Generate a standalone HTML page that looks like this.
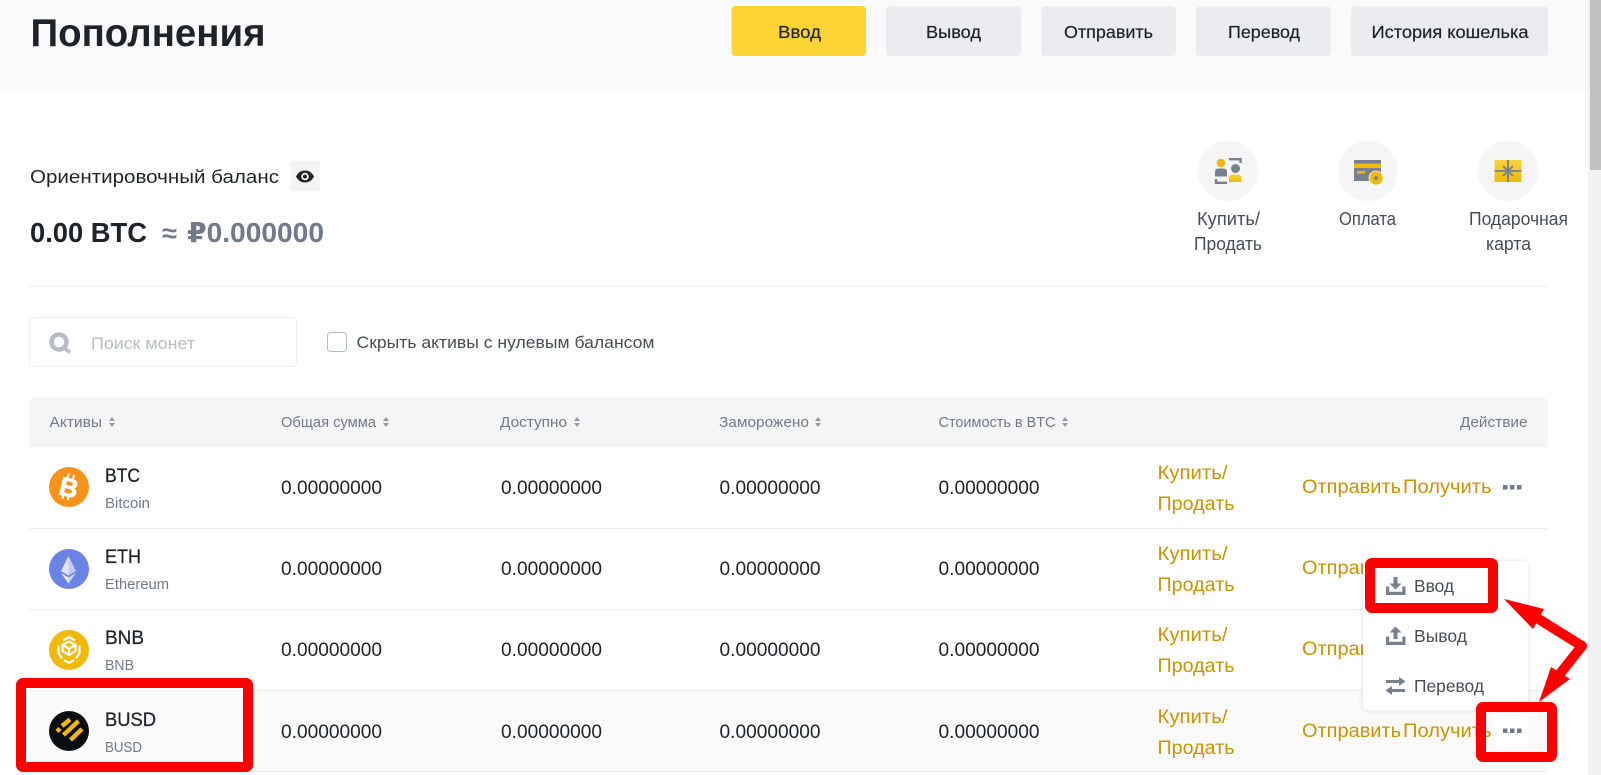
<!DOCTYPE html>
<html lang="ru">
<head>
<meta charset="utf-8">
<title>Пополнения</title>
<style>
html,body{margin:0;padding:0;width:1601px;height:775px;overflow:hidden;background:#fff}
svg{display:block}
text{font-family:"Liberation Sans","DejaVu Sans",sans-serif;fill:#1e2329}
.b{font-size:17.5px;stroke:#1e2329;stroke-width:.2px}
.h{font-size:14.5px;fill:#707a8a}
.n{font-size:19.5px;stroke:#1e2329;stroke-width:.25px}
.s{font-size:15px;fill:#707a8a}
.v{font-size:19px}
.g{font-size:19px;fill:#c99400}
.r{font-size:18px;fill:#474d57}
.m{font-size:17.5px;fill:#474d57}
</style>
</head>
<body>
<svg width="1601" height="775" viewBox="0 0 1601 775" xmlns="http://www.w3.org/2000/svg">
<defs>
<linearGradient id="y" x1="0" y1="0" x2="0" y2="1"><stop offset="0" stop-color="#f8d33a"/><stop offset="1" stop-color="#f0b90b"/></linearGradient>
<path id="sort" d="M0 4 3 0 6 4zM0 6 3 10 6 6z" fill="#929aa5"/>
</defs>

<!-- page header -->
<rect x="0" y="0" width="1589" height="91" fill="#fafafa"/>
<text x="30.500" y="46" font-size="39" font-weight="700" textLength="235" lengthAdjust="spacingAndGlyphs">Пополнения</text>
<rect x="731.500" y="6" width="134.500" height="50" rx="4" fill="#fcd535"/>
<rect x="886" y="6" width="135" height="50" rx="4" fill="#eaecef"/>
<rect x="1041" y="6" width="135" height="50" rx="4" fill="#eaecef"/>
<rect x="1196" y="6" width="135" height="50" rx="4" fill="#eaecef"/>
<rect x="1351" y="6" width="197" height="50" rx="4" fill="#eaecef"/>
<text class="b" x="778" y="38" textLength="43" lengthAdjust="spacingAndGlyphs">Ввод</text>
<text class="b" x="926" y="38" textLength="55" lengthAdjust="spacingAndGlyphs">Вывод</text>
<text class="b" x="1064" y="38" textLength="89" lengthAdjust="spacingAndGlyphs">Отправить</text>
<text class="b" x="1228" y="38" textLength="72" lengthAdjust="spacingAndGlyphs">Перевод</text>
<text class="b" x="1371.500" y="38" textLength="157" lengthAdjust="spacingAndGlyphs">История кошелька</text>

<!-- balance -->
<text x="30" y="183" font-size="18" textLength="249" lengthAdjust="spacingAndGlyphs">Ориентировочный баланс</text>
<rect x="290" y="161" width="30" height="30" rx="4" fill="#f5f5f5"/>
<path d="M296 176.500C298 172.500 301 170.500 305 170.500C309 170.500 312 172.500 314 176.500C312 180.500 309 182.500 305 182.500C301 182.500 298 180.500 296 176.500Z" fill="#1e2329"/>
<circle cx="305" cy="176.500" r="3.800" fill="#f5f5f5"/>
<circle cx="305" cy="176.500" r="2" fill="#1e2329"/>
<text x="30" y="242" font-size="28" font-weight="700" textLength="117" lengthAdjust="spacingAndGlyphs">0.00 BTC</text>
<text x="162" y="242" font-size="26" font-weight="700" style="fill:#707a8a" textLength="15" lengthAdjust="spacingAndGlyphs">≈</text>
<text x="187" y="242" font-size="28" font-weight="700" style="fill:#707a8a" textLength="137" lengthAdjust="spacingAndGlyphs">₽0.000000</text>

<!-- quick actions -->
<circle cx="1228" cy="171" r="30" fill="#f5f5f5"/>
<circle cx="1368" cy="171" r="30" fill="#f5f5f5"/>
<circle cx="1508" cy="171" r="30" fill="#f5f5f5"/>
<!-- buy/sell -->
<circle cx="1221" cy="163" r="4.300" fill="#f0b90b"/>
<path d="M1215 176.500V172Q1215 168.500 1218.500 168.500H1223.500Q1227 168.500 1227 172V176.500Z" fill="#76808f"/>
<circle cx="1235.500" cy="168.500" r="4.500" fill="#76808f"/>
<path d="M1229 182V178Q1229 174.500 1232.500 174.500H1238Q1241.500 174.500 1241.500 178V182Z" fill="url(#y)"/>
<path d="M1229 159.200H1240.500V163" fill="none" stroke="#76808f" stroke-width="2.400"/>
<path d="M1216 179V182.800H1227" fill="none" stroke="#76808f" stroke-width="2.400"/>
<!-- pay -->
<rect x="1354" y="160" width="27" height="21" fill="#76808f"/>
<rect x="1354" y="163.500" width="27" height="4.500" fill="#f0b90b"/>
<rect x="1357" y="171" width="8" height="2.500" fill="#f0b90b"/>
<circle cx="1376" cy="178" r="7" fill="#f0b90b" stroke="#f5f5f5" stroke-width="0.800"/>
<path d="M1376 175.500 1378.500 178 1376 180.500 1373.500 178Z" fill="#76808f"/>
<!-- gift -->
<rect x="1494.500" y="160" width="27" height="22" fill="url(#y)"/>
<path d="M1494.500 171H1521.500M1508 160V182M1503 166 1513 176M1513 166 1503 176" stroke="#76808f" stroke-width="1.800" fill="none"/>
<text class="r" x="1197" y="225" textLength="63" lengthAdjust="spacingAndGlyphs">Купить/</text>
<text class="r" x="1194" y="250" textLength="68" lengthAdjust="spacingAndGlyphs">Продать</text>
<text class="r" x="1339" y="225" textLength="57" lengthAdjust="spacingAndGlyphs">Оплата</text>
<text class="r" x="1469" y="225" textLength="99" lengthAdjust="spacingAndGlyphs">Подарочная</text>
<text class="r" x="1486" y="250" textLength="45" lengthAdjust="spacingAndGlyphs">карта</text>

<rect x="29" y="286" width="1519" height="1" fill="#eaecef"/>

<!-- search -->
<rect x="29.500" y="317.500" width="267" height="49" rx="4" fill="#fff" stroke="#eaecef"/>
<circle cx="59" cy="342" r="7.500" fill="none" stroke="#b7bdc6" stroke-width="4.500"/>
<path d="M63 347 70 352.500" stroke="#b7bdc6" stroke-width="3.500"/>
<text x="91" y="349" font-size="17" style="fill:#b7bdc6" textLength="104" lengthAdjust="spacingAndGlyphs">Поиск монет</text>
<rect x="327.500" y="332.500" width="19" height="19" rx="3" fill="#fff" stroke="#b7bdc6"/>
<text x="356.500" y="348" font-size="17" style="fill:#474d57" textLength="298" lengthAdjust="spacingAndGlyphs">Скрыть активы с нулевым балансом</text>

<!-- table header -->
<path d="M29 447V405Q29 397 37 397H1540Q1548 397 1548 405V447Z" fill="#f5f5f5"/>
<text class="h" x="49.500" y="427" textLength="52.500" lengthAdjust="spacingAndGlyphs">Активы</text>
<use href="#sort" x="109" y="417"/>
<text class="h" x="281" y="427" textLength="95" lengthAdjust="spacingAndGlyphs">Общая сумма</text>
<use href="#sort" x="383" y="417"/>
<text class="h" x="500" y="427" textLength="67" lengthAdjust="spacingAndGlyphs">Доступно</text>
<use href="#sort" x="574" y="417"/>
<text class="h" x="719" y="427" textLength="90" lengthAdjust="spacingAndGlyphs">Заморожено</text>
<use href="#sort" x="815" y="417"/>
<text class="h" x="938.500" y="427" textLength="117" lengthAdjust="spacingAndGlyphs">Стоимость в BTC</text>
<use href="#sort" x="1062" y="417"/>
<text class="h" x="1460" y="427" textLength="67.500" lengthAdjust="spacingAndGlyphs">Действие</text>

<!-- rows -->
<rect x="29" y="691" width="1519" height="80" fill="#fafafa"/>
<rect x="29" y="528" width="1519" height="1" fill="#eaecef"/>
<rect x="29" y="609" width="1519" height="1" fill="#eaecef"/>
<rect x="29" y="690" width="1519" height="1" fill="#eaecef"/>
<rect x="29" y="771" width="1519" height="1" fill="#eaecef"/>

<!-- BTC -->
<circle cx="69" cy="487" r="20" fill="#f7931a"/>
<g transform="rotate(14 69 487)">
<text x="69" y="496.500" font-size="26" font-weight="700" text-anchor="middle" style="fill:#fff;stroke:#fff;stroke-width:.7px">B</text>
<path d="M65.500 474V478M71 474V478M65.500 496V500M71 496V500" stroke="#fff" stroke-width="2.200"/>
</g>
<text class="n" x="105" y="482" textLength="35" lengthAdjust="spacingAndGlyphs">BTC</text>
<text class="s" x="105" y="508" textLength="45" lengthAdjust="spacingAndGlyphs">Bitcoin</text>
<text class="v" x="281" y="494" textLength="101" lengthAdjust="spacingAndGlyphs">0.00000000</text>
<text class="v" x="501" y="494" textLength="101" lengthAdjust="spacingAndGlyphs">0.00000000</text>
<text class="v" x="719.500" y="494" textLength="101" lengthAdjust="spacingAndGlyphs">0.00000000</text>
<text class="v" x="938.500" y="494" textLength="101" lengthAdjust="spacingAndGlyphs">0.00000000</text>
<text class="g" x="1157.500" y="479" textLength="70" lengthAdjust="spacingAndGlyphs">Купить/</text>
<text class="g" x="1157.500" y="510" textLength="77" lengthAdjust="spacingAndGlyphs">Продать</text>
<text class="g" x="1302" y="493" textLength="99" lengthAdjust="spacingAndGlyphs">Отправить</text>
<text class="g" x="1403" y="493" textLength="88.500" lengthAdjust="spacingAndGlyphs">Получить</text>
<path d="M1503 485h4.500v4.500h-4.500zM1510 485h4.500v4.500h-4.500zM1517 485h4.500v4.500h-4.500z" fill="#707a8a"/>

<!-- ETH -->
<circle cx="69" cy="569" r="20" fill="#6b83e4"/>
<path d="M68.500 556 61 571 68.500 575.500Z" fill="#dfe5f9"/>
<path d="M68.500 556 76 571 68.500 575.500Z" fill="#c3cdf4"/>
<path d="M61 573 68.500 583.500V577.500Z" fill="#e9edfb"/>
<path d="M76 573 68.500 583.500V577.500Z" fill="#ccd5f5"/>
<text class="n" x="105" y="563" textLength="36" lengthAdjust="spacingAndGlyphs">ETH</text>
<text class="s" x="105" y="589" textLength="64" lengthAdjust="spacingAndGlyphs">Ethereum</text>
<text class="v" x="281" y="575" textLength="101" lengthAdjust="spacingAndGlyphs">0.00000000</text>
<text class="v" x="501" y="575" textLength="101" lengthAdjust="spacingAndGlyphs">0.00000000</text>
<text class="v" x="719.500" y="575" textLength="101" lengthAdjust="spacingAndGlyphs">0.00000000</text>
<text class="v" x="938.500" y="575" textLength="101" lengthAdjust="spacingAndGlyphs">0.00000000</text>
<text class="g" x="1157.500" y="560" textLength="70" lengthAdjust="spacingAndGlyphs">Купить/</text>
<text class="g" x="1157.500" y="591" textLength="77" lengthAdjust="spacingAndGlyphs">Продать</text>
<text class="g" x="1302" y="574" textLength="99" lengthAdjust="spacingAndGlyphs">Отправить</text>

<!-- BNB -->
<circle cx="69" cy="650" r="20" fill="#f0b90b"/>
<g fill="none" stroke="#fff" stroke-width="2.200">
<path d="M63 640.500 69 637 75 640.500"/>
<path d="M58.500 645.500V653L62 658.500M79.500 645.500V653L76 658.500"/>
<path d="M62.500 645 69 641.500 75.500 645 75.500 651 69 655 62.500 651Z"/>
<path d="M62.500 645 69 648.500 75.500 645M69 648.500V655"/>
<path d="M64 660 69 663 74 660"/>
</g>
<text class="n" x="105" y="644" textLength="39" lengthAdjust="spacingAndGlyphs">BNB</text>
<text class="s" x="105" y="670" textLength="29" lengthAdjust="spacingAndGlyphs">BNB</text>
<text class="v" x="281" y="656" textLength="101" lengthAdjust="spacingAndGlyphs">0.00000000</text>
<text class="v" x="501" y="656" textLength="101" lengthAdjust="spacingAndGlyphs">0.00000000</text>
<text class="v" x="719.500" y="656" textLength="101" lengthAdjust="spacingAndGlyphs">0.00000000</text>
<text class="v" x="938.500" y="656" textLength="101" lengthAdjust="spacingAndGlyphs">0.00000000</text>
<text class="g" x="1157.500" y="641" textLength="70" lengthAdjust="spacingAndGlyphs">Купить/</text>
<text class="g" x="1157.500" y="672" textLength="77" lengthAdjust="spacingAndGlyphs">Продать</text>
<text class="g" x="1302" y="655" textLength="99" lengthAdjust="spacingAndGlyphs">Отправить</text>

<!-- BUSD -->
<circle cx="69" cy="731" r="20" fill="#0b0e11"/>
<g stroke="#f0b90b" stroke-width="4.400" fill="none">
<path d="M57 731.500 60 728.500"/>
<path d="M62 726 70 719.500"/>
<path d="M63.500 735 78.500 721"/>
<path d="M70.500 740 82 729"/>
</g>
<text class="n" x="105" y="726" textLength="51" lengthAdjust="spacingAndGlyphs">BUSD</text>
<text class="s" x="105" y="752" textLength="37" lengthAdjust="spacingAndGlyphs">BUSD</text>
<text class="v" x="281" y="738" textLength="101" lengthAdjust="spacingAndGlyphs">0.00000000</text>
<text class="v" x="501" y="738" textLength="101" lengthAdjust="spacingAndGlyphs">0.00000000</text>
<text class="v" x="719.500" y="738" textLength="101" lengthAdjust="spacingAndGlyphs">0.00000000</text>
<text class="v" x="938.500" y="738" textLength="101" lengthAdjust="spacingAndGlyphs">0.00000000</text>
<text class="g" x="1157.500" y="723" textLength="70" lengthAdjust="spacingAndGlyphs">Купить/</text>
<text class="g" x="1157.500" y="754" textLength="77" lengthAdjust="spacingAndGlyphs">Продать</text>
<text class="g" x="1302" y="737" textLength="99" lengthAdjust="spacingAndGlyphs">Отправить</text>
<text class="g" x="1403" y="737" textLength="88.500" lengthAdjust="spacingAndGlyphs">Получить</text>
<rect x="1495" y="713" width="33" height="35" fill="#fff"/>
<path d="M1503 728.500h4.500v4.500h-4.500zM1510 728.500h4.500v4.500h-4.500zM1517 728.500h4.500v4.500h-4.500z" fill="#707a8a"/>

<!-- dropdown -->
<rect x="1363" y="561" width="165" height="149" rx="5" fill="#fff" style="filter:drop-shadow(0 0 3px rgba(0,0,0,.12))"/>
<!-- deposit icon -->
<path d="M1393.500 577h4v6.500h4l-6 6-6-6h4z" fill="#76808f"/>
<path d="M1386 586.500h3.200v5.300h13.100v-5.300h3.200v8.500h-19.500z" fill="#76808f"/>
<text class="m" x="1414" y="592" textLength="40" lengthAdjust="spacingAndGlyphs">Ввод</text>
<!-- withdraw icon -->
<path d="M1393.500 639h4v-6.500h4l-6-6-6 6h4z" fill="#76808f"/>
<path d="M1386 636.500h3.200v5.300h13.100v-5.300h3.200v8.500h-19.500z" fill="#76808f"/>
<text class="m" x="1414" y="642" textLength="53" lengthAdjust="spacingAndGlyphs">Вывод</text>
<!-- transfer icon -->
<path d="M1386 680h13v-3l6.500 4.500-6.500 4.500v-3h-13z" fill="#76808f"/>
<path d="M1405 689h-13v-3l-6.500 4.500 6.500 4.500v-3h13z" fill="#76808f"/>
<text class="m" x="1414" y="692" textLength="70" lengthAdjust="spacingAndGlyphs">Перевод</text>

<!-- scrollbar -->
<rect x="1588" y="0" width="13" height="775" fill="#f1f1f1"/>
<rect x="1590" y="0" width="11" height="170" fill="#c1c1c1"/>

<!-- red annotations -->
<rect x="21" y="683" width="227" height="84" rx="2" fill="none" stroke="#ff0000" stroke-width="10"/>
<rect x="1370" y="563" width="123" height="45" rx="2" fill="none" stroke="#ff0000" stroke-width="10"/>
<rect x="1481" y="707" width="71" height="50" rx="2" fill="none" stroke="#ff0000" stroke-width="10"/>
<path d="M1504 599 1544 609 1533 629Z" fill="#ff0000"/>
<path d="M1537 618 1582 646 1559 675" fill="none" stroke="#ff0000" stroke-width="10" stroke-linejoin="round"/>
<path d="M1539 702 1551 667 1570 679Z" fill="#ff0000"/>
</svg>
</body>
</html>
